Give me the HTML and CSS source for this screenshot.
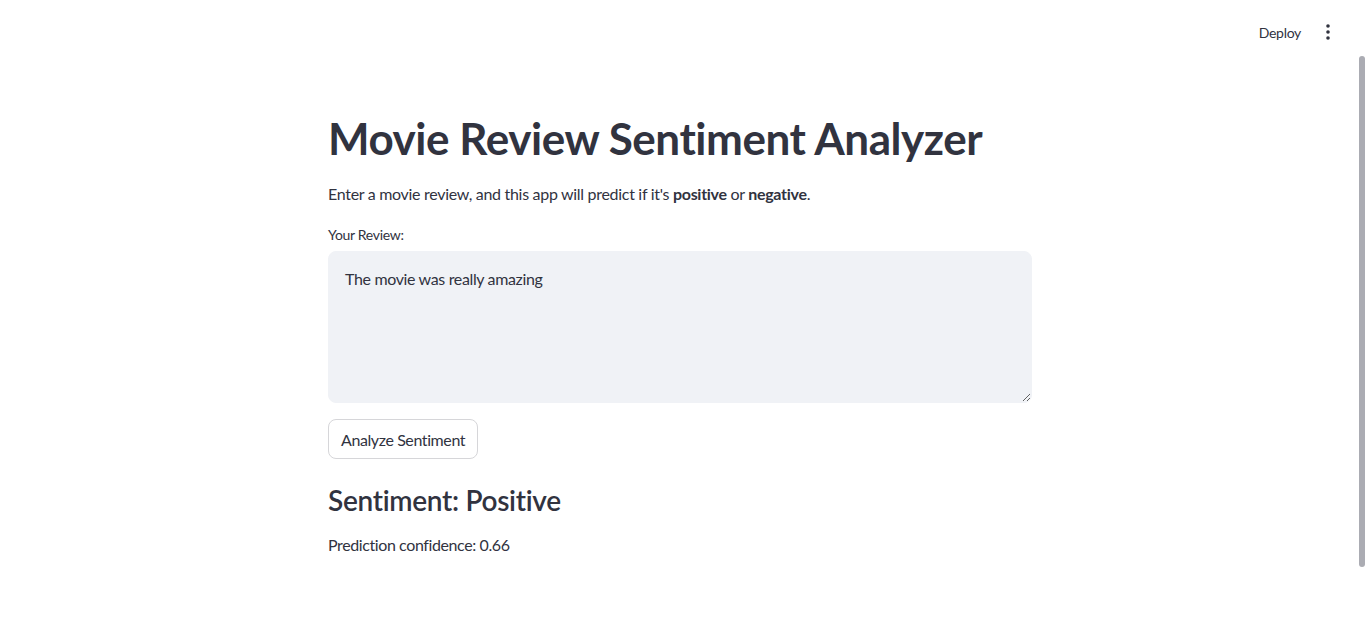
FILE: index.html
```html
<!DOCTYPE html>
<html lang="en">
<head>
<meta charset="utf-8">
<title>Movie Review Sentiment Analyzer</title>
<link rel="stylesheet" href="styles.css">
</head>
<body>
<header class="topbar">
  <span class="deploy">Deploy</span>
  <span class="menu" aria-label="Main menu">
    <svg width="4" height="16" viewBox="0 0 4 16"><circle cx="2" cy="2" r="1.8" fill="#31333f"/><circle cx="2" cy="8" r="1.8" fill="#31333f"/><circle cx="2" cy="14" r="1.8" fill="#31333f"/></svg>
  </span>
</header>
<div class="scrollbar"></div>
<div class="page">
  <main class="main">
    <h1 class="title">Movie Review Sentiment Analyzer</h1>
    <p class="intro">Enter a movie review, and this app will predict if it's <strong>positive</strong> or <strong>negative</strong>.</p>
    <label class="label" for="review">Your Review:</label>
    <textarea id="review" class="review">The movie was really amazing</textarea>
    <div class="btn-row"><button class="btn">Analyze Sentiment</button></div>
    <h3 class="result">Sentiment: Positive</h3>
    <p class="confidence">Prediction confidence: 0.66</p>
  </main>
</div>
</body>
</html>
```
FILE: styles.css
```css
html, body {
  margin: 0;
  padding: 0;
  background: #ffffff;
  color: #31333f;
  font-family: Lato, "Liberation Sans", sans-serif;
  overflow: hidden;
}
.topbar {
  position: fixed;
  top: 0;
  left: 0;
  right: 0;
  height: 60px;
  display: flex;
  align-items: center;
  justify-content: flex-end;
  padding-right: 36px;
  gap: 25px;
  background: #ffffff;
  box-sizing: border-box;
}
.deploy {
  font-size: 14px;
  letter-spacing: -0.3px;
  margin-top: 4px;
}
.menu {
  display: flex;
  margin-top: 4px;
}
.scrollbar {
  position: fixed;
  right: 1px;
  top: 56px;
  width: 6px;
  height: 511px;
  border-radius: 3px;
  background: #abacb3;
}
.page {
  width: 1360px;
  display: flex;
  justify-content: center;
}
.main {
  width: 704px;
  padding-top: 112px;
  display: flex;
  flex-direction: column;
}
.title {
  margin: 0;
  font-size: 44px;
  line-height: 53px;
  font-weight: 700;
  letter-spacing: -0.45px;
}
.intro {
  margin: 17px 0 0;
  font-size: 16px;
  line-height: 24px;
  letter-spacing: -0.3px;
}
.intro strong { font-weight: 700; }
.label {
  margin-top: 19px;
  font-size: 14px;
  line-height: 20px;
  height: 26px;
  letter-spacing: -0.3px;
}
.review {
  box-sizing: border-box;
  width: 704px;
  height: 152px;
  border: 1px solid #f0f2f6;
  border-radius: 8px;
  background: #f0f2f6;
  padding: 15px 16px 16px;
  font-family: inherit;
  font-size: 16px;
  line-height: 24px;
  letter-spacing: -0.35px;
  color: #31333f;
  resize: vertical;
  outline: none;
}
.btn-row {
  margin-top: 16px;
  display: flex;
}
.btn {
  height: 40px;
  padding: 0 12px;
  border: 1px solid #d6d6d9;
  border-radius: 8px;
  background: #ffffff;
  font-family: inherit;
  font-size: 16px;
  letter-spacing: -0.4px;
  color: #31333f;
}
.result {
  margin: 23px 0 0;
  font-size: 28px;
  line-height: 36px;
  font-weight: 600;
  letter-spacing: -0.3px;
}
.confidence {
  margin: 15px 0 0;
  font-size: 16px;
  line-height: 24px;
  letter-spacing: -0.4px;
}
```
